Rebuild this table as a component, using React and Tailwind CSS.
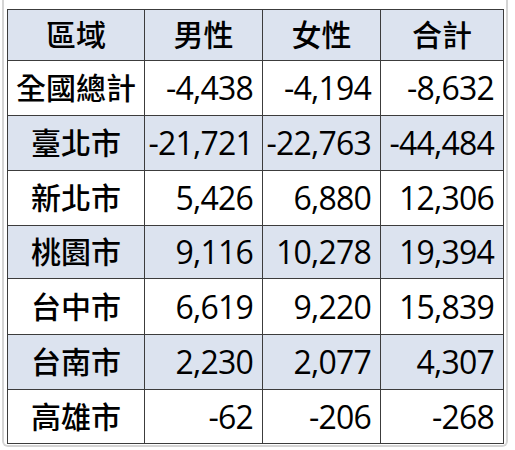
const rows = [
  { area: "全國總計", m: "-4,438", f: "-4,194", t: "-8,632", h: "h-[55px]" },
  { area: "臺北市", m: "-21,721", f: "-22,763", t: "-44,484", h: "h-[55px]", shade: true },
  { area: "新北市", m: "5,426", f: "6,880", t: "12,306", h: "h-[55px]" },
  { area: "桃園市", m: "9,116", f: "10,278", t: "19,394", h: "h-[53px]", shade: true },
  { area: "台中市", m: "6,619", f: "9,220", t: "15,839", h: "h-[56px]" },
  { area: "台南市", m: "2,230", f: "2,077", t: "4,307", h: "h-[55px]", shade: true },
  { area: "高雄市", m: "-62", f: "-206", t: "-268", h: "h-[54px]" },
];

const font = { fontFamily: '"Open Sans", "Noto Sans CJK TC", sans-serif' };

const NumCell = ({ value }) => (
  <td className="border-[1.5px] border-[#3c3c3c] pr-[9px] text-right text-[32px] font-medium leading-none tracking-[-0.8px]">{value}</td>
);

export default function App() {
  return (
    <div className="min-h-[450px] bg-white pl-[2px] text-black" style={font}>
      <div className="w-[506px] rounded-b-md border-x-2 border-b-2 border-[#d4d4d4] px-[3px] pt-[9px] pb-[1px]">
        <table className="w-[496px] table-fixed border-collapse">
          <colgroup>
            <col className="w-[137px]" />
            <col className="w-[118px]" />
            <col className="w-[118px]" />
            <col className="w-[123px]" />
          </colgroup>
          <thead>
            <tr className="h-[51px] bg-[#dce3ef]">
              {["區域", "男性", "女性", "合計"].map(label => (
                <th key={label} className="border-[1.5px] border-[#3c3c3c] text-center text-[30px] font-medium leading-none">
                  {label}
                </th>
              ))}
            </tr>
          </thead>
          <tbody>
            {rows.map(row => (
              <tr key={row.area} className={`${row.h} ${row.shade ? "bg-[#dce3ef]" : "bg-white"}`}>
                <td className="border-[1.5px] border-[#3c3c3c] text-center text-[30px] font-medium leading-none">{row.area}</td>
                <NumCell value={row.m} />
                <NumCell value={row.f} />
                <NumCell value={row.t} />
              </tr>
            ))}
          </tbody>
        </table>
      </div>
    </div>
  );
}
